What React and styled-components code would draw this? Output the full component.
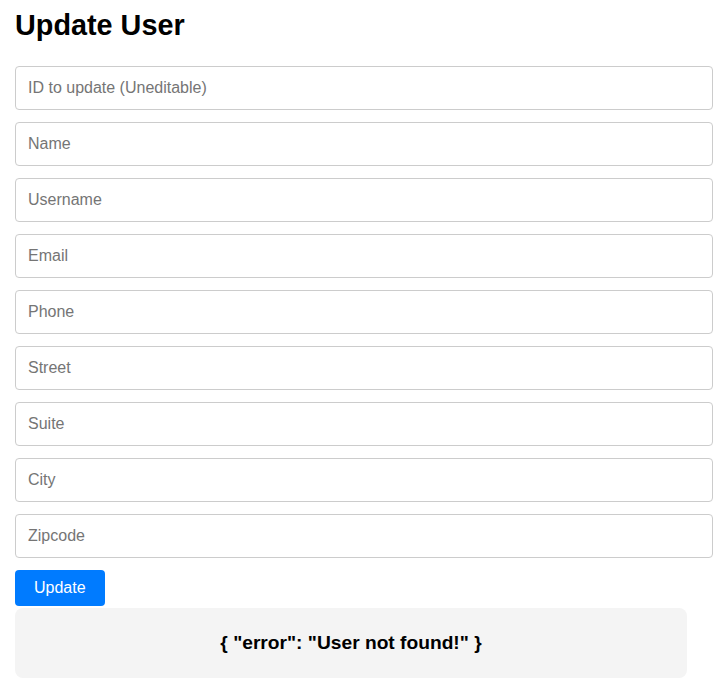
import React from "react";
import styled, { createGlobalStyle } from "styled-components";

const Global = createGlobalStyle`
  html, body { margin: 0; padding: 0; background: #fff; }
  body { font-family: "Liberation Sans", Arial, sans-serif; color: #000; }
  * { box-sizing: border-box; }
`;

const Page = styled.div`
  padding: 9px 38px 0 15px;
`;

const Title = styled.h1`
  margin: 0;
  font-size: 28.8px;
  line-height: 33px;
  font-weight: 700;
`;

const Form = styled.form`
  margin-top: 24px;
  display: flex;
  flex-direction: column;
  gap: 12px;
  width: 698px;
`;

const Input = styled.input`
  width: 698px;
  height: 44px;
  padding: 0 12px;
  border: 1px solid #ccc;
  border-radius: 4px;
  font-family: inherit;
  font-size: 16px;
  color: #000;
  background: #fff;
  outline: none;
  &::placeholder { color: #757575; }
`;

const Button = styled.button`
  align-self: flex-start;
  height: 36px;
  padding: 0 19px;
  border: 0;
  border-radius: 4px;
  background: #007bff;
  color: #fff;
  font-family: inherit;
  font-size: 16px;
  cursor: pointer;
`;

const Result = styled.div`
  margin-top: 2px;
  width: 672px;
  padding: 24px 0;
  background: #f4f4f4;
  border-radius: 8px;
  text-align: center;
  font-size: 19.2px;
  line-height: 22px;
  font-weight: 700;
`;

const fields = [
  "ID to update (Uneditable)",
  "Name",
  "Username",
  "Email",
  "Phone",
  "Street",
  "Suite",
  "City",
  "Zipcode",
];

export default function App() {
  return (
    <Page>
      <Global />
      <Title>Update User</Title>
      <Form onSubmit={(e) => e.preventDefault()}>
        {fields.map((f, i) => (
          <Input key={f} placeholder={f} readOnly={i === 0} />
        ))}
        <Button type="submit">Update</Button>
      </Form>
      <Result>{'{ "error": "User not found!" }'}</Result>
    </Page>
  );
}
